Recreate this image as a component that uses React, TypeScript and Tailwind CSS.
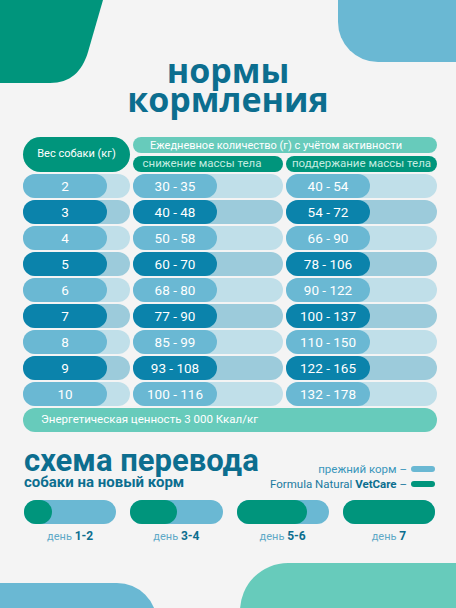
import React from "react";

const rows: [string, string, string, boolean][] = [
  ["2", "30 - 35", "40 - 54", false],
  ["3", "40 - 48", "54 - 72", true],
  ["4", "50 - 58", "66 - 90", false],
  ["5", "60 - 70", "78 - 106", true],
  ["6", "68 - 80", "90 - 122", false],
  ["7", "77 - 90", "100 - 137", true],
  ["8", "85 - 99", "110 - 150", false],
  ["9", "93 - 108", "122 - 165", true],
  ["10", "100 - 116", "132 - 178", false],
];

const roboto = { fontFamily: 'Roboto, "Open Sans", sans-serif' };

function Cell({ text, dark, w }: { text: string; dark: boolean; w: string }) {
  return (
    <div className={`${w} shrink-0 h-[24px] rounded-full flex ${dark ? "bg-[#9ccbdb]" : "bg-[#c0dfe9]"}`}>
      <div
        className={`w-[84px] h-full rounded-full flex items-center justify-center text-white text-[13.5px] ${
          dark ? "bg-[#0b83ab]" : "bg-[#6ab8d3]"
        }`}
      >
        {text}
      </div>
    </div>
  );
}

const days: [number, string][] = [
  [28, "1-2"],
  [47, "3-4"],
  [70, "5-6"],
  [92, "7"],
];

export default function App() {
  return (
    <div
      className="relative w-[456px] h-[608px] overflow-hidden bg-[#f4f4f4]"
      style={{ fontFamily: '"Open Sans", "Noto Sans", sans-serif' }}
    >
      {/* decorative corners */}
      <svg className="absolute left-0 top-0" width="110" height="90" viewBox="0 0 110 90">
        <path d="M0 0 H103 L88 52 C82 72 70 83 50 83 H0 Z" fill="#00957c" />
      </svg>
      <div className="absolute right-0 top-0 w-[118px] h-[62px] bg-[#6ab8d3] rounded-bl-[40px]" />
      <div className="absolute left-0 top-[583px] w-[157px] h-[60px] bg-[#6ab8d3] rounded-tr-[40px]" />
      <div className="absolute left-[240px] top-[563px] w-[240px] h-[80px] bg-[#67cbbb] rounded-tl-[48px]" />

      <div className="relative flex flex-col pt-[56px]">
        <h1 className="text-center font-bold text-[34px] leading-[29px] text-[#0c6e8f]">
          нормы
          <br />
          кормления
        </h1>

        {/* table */}
        <div className="mt-[23px] pl-[23px] pr-[19px] flex flex-col gap-[2px]" style={roboto}>
          <div className="flex gap-[3px]">
            <div className="w-[107px] shrink-0 h-[35px] rounded-full bg-[#00957c] text-white text-[11px] flex items-center justify-center">
              Вес собаки (кг)
            </div>
            <div className="w-[304px] shrink-0 flex flex-col gap-[3px]">
              <div className="h-[16px] rounded-full bg-[#67cbbb] text-white text-[11px] leading-none flex items-center pl-[17px]">
                Ежедневное количество (г) с учётом активности
              </div>
              <div className="flex gap-[3px]">
                <div className="w-[150px] h-[16px] rounded-full bg-[#00957c] text-[#c4ece1] text-[11.5px] leading-none flex items-center justify-center pr-[12px]">
                  снижение массы тела
                </div>
                <div className="w-[151px] h-[16px] rounded-full bg-[#00957c] text-[#c4ece1] text-[11.5px] leading-none flex items-center justify-center">
                  поддержание массы тела
                </div>
              </div>
            </div>
          </div>
          {rows.map(([w, a, b, dark]) => (
            <div key={w} className="flex gap-[3px]">
              <Cell text={w} dark={dark} w="w-[107px]" />
              <Cell text={a} dark={dark} w="w-[150px]" />
              <Cell text={b} dark={dark} w="w-[151px]" />
            </div>
          ))}
          <div className="h-[24px] rounded-full bg-[#67cbbb] text-white text-[11.5px] flex items-center pl-[18px]">
            Энергетическая ценность 3 000 Ккал/кг
          </div>
        </div>

        {/* transition scheme */}
        <div className="mt-[14px] pl-[24px] pr-[21px] flex justify-between items-start" style={roboto}>
          <div className="flex flex-col">
            <div className="font-bold text-[31px] leading-[30px] text-[#0c6e8f] whitespace-nowrap">схема перевода</div>
            <div className="font-bold text-[15px] leading-[15px] text-[#0c6e8f] mt-[-1px] whitespace-nowrap">
              собаки на новый корм
            </div>
          </div>
          <div className="flex flex-col items-end gap-[3px] pt-[17px] text-[11.5px] leading-[12px] whitespace-nowrap">
            <div className="flex items-center gap-[4px] text-[#3a96bb]">
              <span>прежний корм –</span>
              <span className="w-[24px] h-[6px] rounded-full bg-[#6ab8d3]" />
            </div>
            <div className="flex items-center gap-[4px] text-[#1a7aa0]">
              <span>
                Formula Natural <b className="text-[#0c6e8f]">VetCare</b> –
              </span>
              <span className="w-[24px] h-[6px] rounded-full bg-[#00957c]" />
            </div>
          </div>
        </div>

        <div className="mt-[10px] pl-[24px] pr-[21px] grid grid-cols-4 gap-[14px]" style={roboto}>
          {days.map(([g, d]) => (
            <div key={d} className="flex flex-col items-center">
              <div className="w-full h-[24px] rounded-full bg-[#6ab8d3] flex">
                <div className="h-full rounded-full bg-[#00957c]" style={{ width: g }} />
              </div>
              <div className="mt-[4px] text-[11px] leading-[16px] text-[#5ea9c7]">
                день <b className="text-[12px] text-[#0c6e8f]">{d}</b>
              </div>
            </div>
          ))}
        </div>
      </div>
    </div>
  );
}
